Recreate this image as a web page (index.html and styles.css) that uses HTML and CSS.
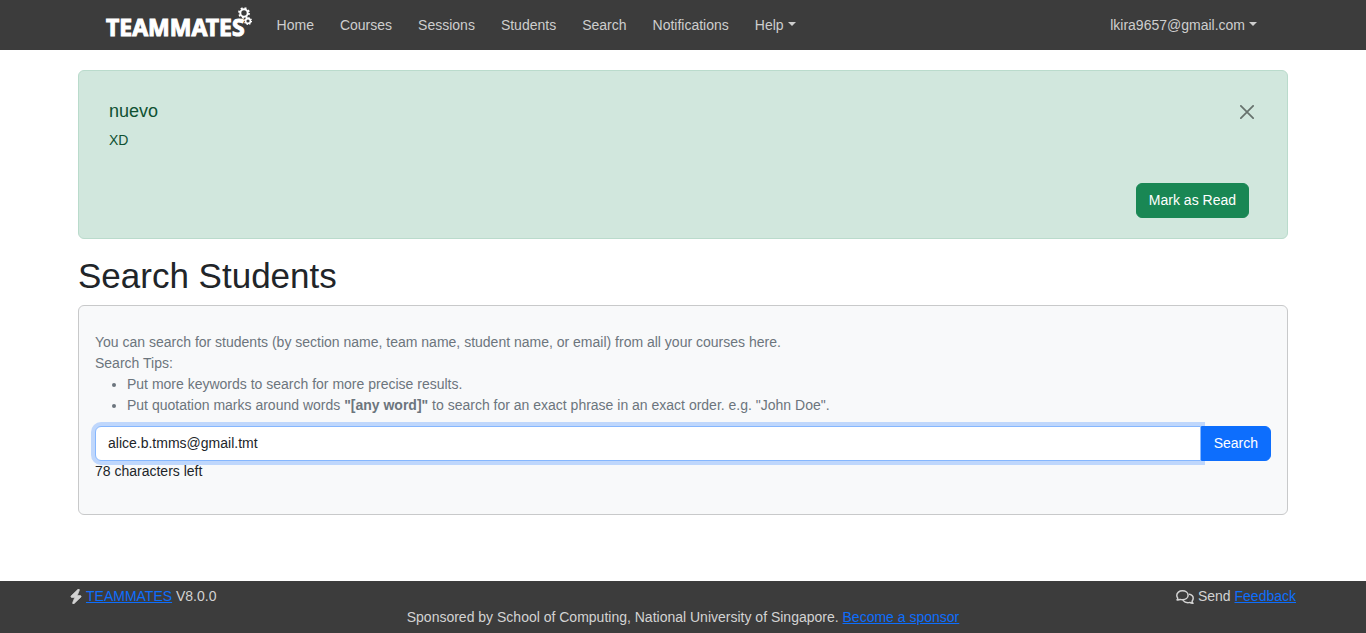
FILE: index.html
```html
<!DOCTYPE html>
<html lang="en">
<head>
<meta charset="utf-8">
<meta name="viewport" content="width=device-width, initial-scale=1">
<title>Search Students - TEAMMATES</title>
<link rel="stylesheet" href="styles.css">
</head>
<body>
<header class="navbar">
  <div class="navbar-inner">
    <a class="brand" href="#" aria-label="TEAMMATES home">
      <span class="brand-text">TEAMMATES</span>
      <svg class="brand-gears" width="16" height="20" viewBox="0 0 16 20" fill="none" stroke="#fff" aria-hidden="true">
        <circle cx="8" cy="6" r="3.7" stroke-width="2"/>
        <circle cx="8" cy="6" r="5" stroke-width="1.8" stroke-dasharray="1.96 1.96"/>
        <circle cx="12" cy="14" r="2.4" stroke-width="1.6"/>
        <circle cx="12" cy="14" r="3.4" stroke-width="1.3" stroke-dasharray="1.33 1.33"/>
      </svg>
    </a>
    <nav class="menu">
      <a class="menu-link" href="#">Home</a>
      <a class="menu-link" href="#">Courses</a>
      <a class="menu-link" href="#">Sessions</a>
      <a class="menu-link" href="#">Students</a>
      <a class="menu-link" href="#">Search</a>
      <a class="menu-link" href="#">Notifications</a>
      <button class="menu-link caret" type="button">Help</button>
    </nav>
    <button class="menu-link caret account" type="button">lkira9657@gmail.com</button>
  </div>
</header>

<main class="content">
  <section class="notice">
    <div class="notice-head">
      <h2 class="notice-title">nuevo</h2>
      <button class="close" type="button" aria-label="Close">
        <svg width="14" height="14" viewBox="0 0 16 16" fill="none" stroke="#000" stroke-width="2" stroke-linecap="round" aria-hidden="true"><path d="M1 1l14 14M15 1L1 15"/></svg>
      </button>
    </div>
    <p class="notice-body">XD</p>
    <div class="notice-actions"><button class="btn btn-success" type="button">Mark as Read</button></div>
  </section>

  <h1 class="title">Search Students</h1>

  <form class="card">
    <div class="help">
      <p>You can search for students (by section name, team name, student name, or email) from all your courses here.</p>
      <p>Search Tips:</p>
      <ul class="tips">
        <li>Put more keywords to search for more precise results.</li>
        <li>Put quotation marks around words <strong>"[any word]"</strong> to search for an exact phrase in an exact order. e.g. "John Doe".</li>
      </ul>
    </div>
    <div class="search-row">
      <input class="search-input" type="text" aria-label="Search keyword" value="alice.b.tmms@gmail.tmt">
      <button class="btn btn-primary" type="button">Search</button>
    </div>
    <p>78 characters left</p>
  </form>
</main>

<footer class="footer">
  <div class="footer-row">
    <div class="footer-item">
      <svg width="12" height="15" viewBox="0 0 448 512" preserveAspectRatio="none" fill="currentColor" stroke="currentColor" stroke-width="24" aria-hidden="true"><path d="M349 45c6-13 2-29-10-38s-28-8-39 2L44 233c-10 9-14 23-9 36s17 20 30 20h112L99 467c-6 13-2 29 10 38s28 8 39-2l256-224c10-9 14-23 9-36s-16-19-29-19H271z"/></svg>
      <span><a class="link" href="#">TEAMMATES</a> V8.0.0</span>
    </div>
    <div class="footer-item">
      <svg width="18" height="14" viewBox="0 0 18 14" fill="none" stroke="currentColor" stroke-width="1.5" stroke-linejoin="round" stroke-linecap="round" aria-hidden="true"><path d="M1 9.900C2 9.100 2 8.500 1.600 7.800C.9 7 .8 6.200.8 5.300C.8 2.700 3.200.8 6.400.8s5.700 1.900 5.700 4.500-2.500 4.500-5.700 4.500c-.8 0-1.500-.1-2.200-.4C3.300 9.900 2.200 10 1 9.900Z"/><path d="M13.600 4.300c2.200.5 3.600 2.100 3.600 4 0 1-.4 1.900-1 2.600-.3.800 0 1.500.8 2.300-1.200.1-2.300-.2-3.200-.8-.6.2-1.200.3-1.900.3-2 0-3.700-.8-4.600-2.100"/></svg>
      <span>Send <a class="link" href="#">Feedback</a></span>
    </div>
  </div>
  <p class="sponsor">Sponsored by School of Computing, National University of Singapore. <a class="link" href="#">Become a sponsor</a></p>
</footer>
</body>
</html>
```

FILE: styles.css
```css
* { box-sizing: border-box; }

body {
  margin: 0;
  min-height: 100vh;
  display: flex;
  flex-direction: column;
  font: 14px/21px "Liberation Sans", Arial, sans-serif;
  color: #212529;
  background: #fff;
}

p, h1, h2, ul { margin: 0; }
button, input { font: inherit; }

.navbar { background: #3c3c3c; padding: 0 96px; }

.navbar-inner {
  display: flex;
  align-items: center;
  max-width: 1174px;
  min-height: 50px;
  margin: 0 auto;
  padding: 0 0 0 10px;
}

.brand {
  position: relative;
  padding-right: 7px;
  margin-right: 12px;
  color: #fff;
  text-decoration: none;
}

.brand-text {
  display: block;
  font: bold 23px/24px "Noto Sans", "Open Sans", sans-serif;
  -webkit-text-stroke: 1px #fff;
  padding-top: 3px;
}

.brand-gears { position: absolute; top: -5px; right: 0; }

.menu { display: flex; flex: 1; }

.menu-link {
  padding: 8px 13px;
  border: 0;
  background: none;
  color: #cecece;
  text-decoration: none;
  line-height: 21px;
  white-space: nowrap;
}

.caret::after {
  content: "";
  display: inline-block;
  margin-left: 4px;
  vertical-align: 4px;
  border: 4px solid transparent;
  border-top-color: currentColor;
  border-bottom: 0;
}

.content {
  flex: 1;
  width: calc(100% - 156px);
  max-width: 1210px;
  margin: 0 auto;
  padding: 20px 0 24px;
}

.notice {
  padding: 30px 38px 20px 30px;
  border: 1px solid #badbcc;
  border-radius: 6px;
  background: #d1e7dd;
  color: #0f5132;
}

.notice-head { display: flex; justify-content: space-between; }
.notice-title { font-size: 18px; line-height: 21px; font-weight: 400; margin-bottom: 8px; }

.close {
  display: flex;
  align-self: flex-start;
  margin-right: -5px;
  padding: 4px 0;
  border: 0;
  background: none;
  opacity: 0.5;
}

.notice-body { margin-bottom: 32px; }
.notice-actions { display: flex; justify-content: flex-end; }

.btn {
  padding: 6px 12px;
  border: 1px solid;
  border-radius: 6px;
  line-height: 21px;
  color: #fff;
}

.btn-success { background: #198754; border-color: #198754; }
.btn-primary { background: #0d6efd; border-color: #0d6efd; border-radius: 0 6px 6px 0; }

.title { margin: 16px 0 8px; font-size: 35px; line-height: 42px; font-weight: 400; }

.card {
  padding: 26px 16px 32px;
  border: 1px solid #c8c9ca;
  border-radius: 6px;
  background: #f8f9fa;
}

.help { color: #6c757d; margin-bottom: 10px; }
.tips { padding-left: 32px; }
.search-row { display: flex; }

.search-input {
  flex: 1;
  min-width: 0;
  padding: 6px 12px;
  border: 1px solid #86b7fe;
  border-radius: 6px 0 0 6px;
  outline: 0;
  background: #fff;
  color: #212529;
  line-height: 21px;
  box-shadow: 0 0 0 4px #bfd7fc;
}

.search-row .btn { z-index: 1; }

.footer { padding: 5px 70px; background: #3c3c3c; color: #d3d3d3; }
.footer-row { display: flex; justify-content: space-between; max-width: 1226px; margin: 0 auto; }
.footer-item { display: flex; align-items: center; gap: 4px; }
.link { color: #0d6efd; }
.sponsor { text-align: center; }
```
